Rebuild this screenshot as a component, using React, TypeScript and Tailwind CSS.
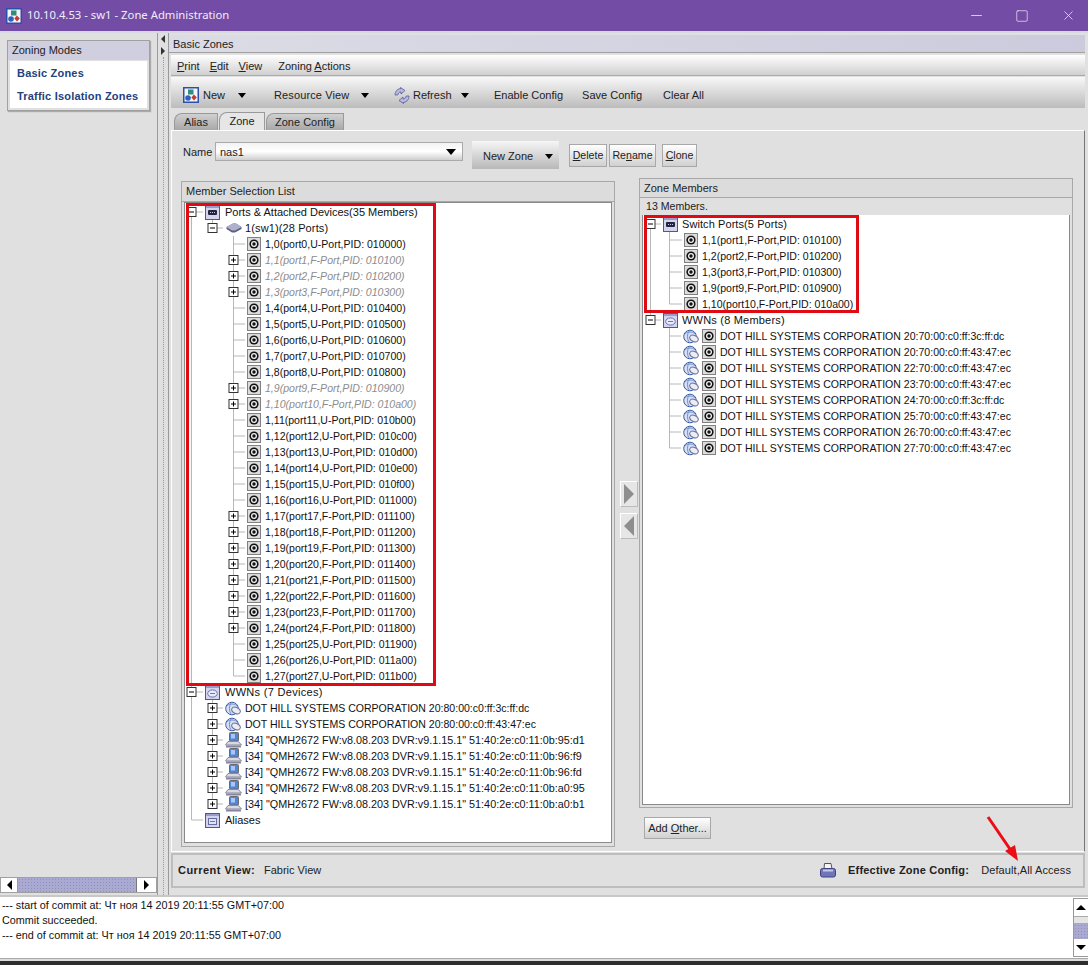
import type { ReactNode } from "react";
import { Minus, Square, X } from "lucide-react";

const ports: [string, string, string, boolean][] = [
  ["1,0", "port0,U", "010000", false],
  ["1,1", "port1,F", "010100", true],
  ["1,2", "port2,F", "010200", true],
  ["1,3", "port3,F", "010300", true],
  ["1,4", "port4,U", "010400", false],
  ["1,5", "port5,U", "010500", false],
  ["1,6", "port6,U", "010600", false],
  ["1,7", "port7,U", "010700", false],
  ["1,8", "port8,U", "010800", false],
  ["1,9", "port9,F", "010900", true],
  ["1,10", "port10,F", "010a00", true],
  ["1,11", "port11,U", "010b00", false],
  ["1,12", "port12,U", "010c00", false],
  ["1,13", "port13,U", "010d00", false],
  ["1,14", "port14,U", "010e00", false],
  ["1,15", "port15,U", "010f00", false],
  ["1,16", "port16,U", "011000", false],
  ["1,17", "port17,F", "011100", false],
  ["1,18", "port18,F", "011200", false],
  ["1,19", "port19,F", "011300", false],
  ["1,20", "port20,F", "011400", false],
  ["1,21", "port21,F", "011500", false],
  ["1,22", "port22,F", "011600", false],
  ["1,23", "port23,F", "011700", false],
  ["1,24", "port24,F", "011800", false],
  ["1,25", "port25,U", "011900", false],
  ["1,26", "port26,U", "011a00", false],
  ["1,27", "port27,U", "011b00", false],
];

const hosts = [
  '[34] "QMH2672 FW:v8.08.203 DVR:v9.1.15.1" 51:40:2e:c0:11:0b:95:d1',
  '[34] "QMH2672 FW:v8.08.203 DVR:v9.1.15.1" 51:40:2e:c0:11:0b:96:f9',
  '[34] "QMH2672 FW:v8.08.203 DVR:v9.1.15.1" 51:40:2e:c0:11:0b:96:fd',
  '[34] "QMH2672 FW:v8.08.203 DVR:v9.1.15.1" 51:40:2e:c0:11:0b:a0:95',
  '[34] "QMH2672 FW:v8.08.203 DVR:v9.1.15.1" 51:40:2e:c0:11:0b:a0:b1',
];

const zoneWwns = [
  "20:70:00:c0:ff:3c:ff:dc",
  "20:70:00:c0:ff:43:47:ec",
  "22:70:00:c0:ff:43:47:ec",
  "23:70:00:c0:ff:43:47:ec",
  "24:70:00:c0:ff:3c:ff:dc",
  "25:70:00:c0:ff:43:47:ec",
  "26:70:00:c0:ff:43:47:ec",
  "27:70:00:c0:ff:43:47:ec",
];

const zonePorts = [
  "1,1(port1,F-Port,PID: 010100)",
  "1,2(port2,F-Port,PID: 010200)",
  "1,3(port3,F-Port,PID: 010300)",
  "1,9(port9,F-Port,PID: 010900)",
  "1,10(port10,F-Port,PID: 010a00)",
];

// tree guide lines plus the optional +/- box, one row tall
const Gutter = ({ width, lines, box, boxX = 0 }: { width: number; lines: string; box?: "plus" | "minus"; boxX?: number }) => (
  <svg width={width} height={16} className="shrink-0">
    <path d={lines} stroke="#b8b8b8" fill="none" />
    {box && (
      <g>
        <rect x={boxX - 4} y={3.5} width={9} height={9} fill="#fff" stroke="#333" />
        <path d={`M${boxX - 2} 8H${boxX + 3}`} stroke="#000" />
        {box === "plus" && <path d={`M${boxX + 0.5} 5.5V10.5`} stroke="#000" />}
      </g>
    )}
  </svg>
);

const PortIcon = () => (
  <svg width={14} height={14} viewBox="0 0 14 14" className="shrink-0">
    <rect x={0.5} y={0.5} width={13} height={13} fill="#dcdcdc" stroke="#808080" />
    <circle cx={7} cy={7} r={4.6} fill="#111" />
    <circle cx={7} cy={7} r={3} fill="#f2f2f2" />
    <circle cx={7} cy={7} r={1.7} fill="#111" />
  </svg>
);

const RootIcon = ({ kind }: { kind: "ports" | "wwn" | "alias" }) => (
  <svg width={15} height={15} viewBox="0 0 15 15" className="shrink-0">
    <rect x={0.5} y={0.5} width={14} height={14} fill="#d4d4ee" stroke="#55558f" />
    <rect x={1} y={1} width={13} height={2} fill="#9a9acb" />
    {kind === "ports" && <rect x={3} y={5} width={9} height={5} rx={1} fill="#24243a" />}
    {kind === "ports" && <path d="M5 7.5H10" stroke="#c8c8ea" strokeDasharray="1 1" />}
    {kind === "wwn" && <ellipse cx={7.5} cy={8.5} rx={4.8} ry={3.6} fill="#eaeaf8" stroke="#6476bd" />}
    {kind === "wwn" && <path d="M5 8.5H10" stroke="#6476bd" />}
    {kind === "alias" && <rect x={3.5} y={5.5} width={8} height={6} fill="#d9e8ee" stroke="#6a6aa8" />}
    {kind === "alias" && <path d="M5 8.5H10" stroke="#5f7fa8" />}
  </svg>
);

const SwitchIcon = () => (
  <svg width={16} height={12} viewBox="0 0 16 12" className="shrink-0">
    <path d="M0.5 5L7 1.5H10L15.5 5V7L9 10.5H6L0.5 7Z" fill="#5f5f80" />
    <path d="M0.5 5L7 1.5H10L15.5 5L9 8.5H6Z" fill="#aeb0cc" />
  </svg>
);

const GlobeIcon = () => (
  <svg width={16} height={15} viewBox="0 0 16 15" className="shrink-0">
    <circle cx={7} cy={7.5} r={6.3} fill="#d3e0f6" stroke="#3c5ba0" />
    <path d="M2 4.5C5 2.5 9 2.5 12 4.5" stroke="#6f90d0" fill="none" />
    <path d="M6.5 1.5C3.8 4.5 3.8 10.5 6.5 13.5" stroke="#6f90d0" fill="none" />
    <ellipse cx={11} cy={9.5} rx={4.5} ry={3} transform="rotate(25 11 9.5)" fill="#ececf4" stroke="#6b6f96" />
  </svg>
);

const HostIcon = () => (
  <svg width={17} height={16} viewBox="0 0 17 16" className="shrink-0">
    <rect x={4.5} y={0.5} width={9} height={8.5} rx={1} fill="#4f86dc" stroke="#6b6b6b" />
    <rect x={6} y={2} width={4} height={4.5} fill="#a8c8f4" />
    <path d="M3 9.5H13.5L16.5 13H0.5Z" fill="#d8d8e4" stroke="#8a8aa0" />
    <path d="M1 13.5H16V15.5H1Z" fill="#85859f" />
  </svg>
);

const AppIcon = () => (
  <svg width={16} height={16} viewBox="0 0 16 16" className="shrink-0">
    <rect x={0.75} y={0.75} width={14.5} height={14.5} fill="#f4f4fa" stroke="#2c4fa8" strokeWidth={1.5} />
    <rect x={5} y={2.5} width={5.5} height={5} fill="#2e8e7c" />
    <circle cx={5} cy={11} r={2.8} fill="#2c62bc" />
    <path d="M11 7.5L13.8 10.5L11 13.5L8.4 10.5Z" fill="#c23a30" />
  </svg>
);

const RefreshIcon = () => (
  <svg width={16} height={17} viewBox="0 0 16 17">
    <path d="M1 8C1 4 4 1.5 7 1.5L6.5 0.5L11 3.5L7 7V5C5 5 4 6.5 3.8 8Z" fill="#b8b8e4" stroke="#4c4c8c" strokeWidth={0.7} />
    <path d="M15 9C15 13 12 15.5 9 15.5L9.5 16.5L5 13.5L9 10V12C11 12 12 10.5 12.2 9Z" fill="#b8b8e4" stroke="#4c4c8c" strokeWidth={0.7} />
  </svg>
);

const PrinterIcon = () => (
  <svg width={16} height={15} viewBox="0 0 16 15" className="shrink-0">
    <path d="M4.5 0.5H11L12 6H4Z" fill="#f4f4f4" stroke="#555" />
    <rect x={0.5} y={5.5} width={15} height={8.5} rx={2} fill="#6f75b8" stroke="#3e4380" />
    <rect x={3} y={6.5} width={10} height={2} fill="#c4c8ea" />
  </svg>
);

const Caret = () => <span className="w-0 h-0 border-x-[4px] border-x-transparent border-t-[5px] border-t-black" />;

const ToolButton = ({ children, className = "" }: { children: ReactNode; className?: string }) => (
  <div className={`flex items-center h-[30px] ${className}`}>{children}</div>
);

const SmallButton = ({ children, className = "" }: { children: ReactNode; className?: string }) => (
  <button className={`h-[23px] border border-[#a8a8a8] bg-gradient-to-b from-white to-[#d0d0d0] text-[10.6px] text-[#222] ${className}`}>{children}</button>
);

const Row = ({ gutter, children, grey, className = "text-[10.55px]" }: { gutter: ReactNode; children: ReactNode; grey?: boolean; className?: string }) => (
  <div className={`flex items-center h-4 whitespace-nowrap ${className} ${grey ? "text-[#8c8c8c] italic" : "text-[#111]"}`}>{gutter}{children}</div>
);

const MemberTree = () => (
  <div className="relative flex-1 bg-white border border-[#8a8a8a] pt-[1px] overflow-hidden">
    <div className="absolute left-[1px] top-0 w-[250px] h-[483px] border-[3px] border-[#e00b12]" />
    <Row className="text-[11px]" gutter={<Gutter width={20} lines="M6.5 8V16M6.5 8H18" box="minus" boxX={6} />}>
      <RootIcon kind="ports" />
      <span className="ml-[5px]">Ports &amp; Attached Devices(35 Members)</span>
    </Row>
    <Row className="text-[11px] tracking-[0.12px]" gutter={<Gutter width={41} lines="M6.5 0V16M27.5 0V8H38" box="minus" boxX={27} />}>
      <SwitchIcon />
      <span className="ml-[3px]">1(sw1)(28 Ports)</span>
    </Row>
    {ports.map(([slot, name, pid, grey], i) => {
      const last = i === ports.length - 1;
      const expandable = grey || (i >= 17 && i <= 24);
      return (
        <Row
          key={slot}
          grey={grey}
          gutter={<Gutter width={62} lines={`M6.5 0V16M48.5 0V${last ? 8 : 16}M48.5 8H60`} box={expandable ? "plus" : undefined} boxX={48} />}
        >
          <PortIcon />
          <span className="ml-[4px] pt-[2px]">{`${slot}(${name}-Port,PID: ${pid})`}</span>
        </Row>
      );
    })}
    <Row className="text-[11px] tracking-[0.3px]" gutter={<Gutter width={20} lines="M6.5 0V16M6.5 8H18" box="minus" boxX={6} />}>
      <RootIcon kind="wwn" />
      <span className="ml-[5px]">WWNs (7 Devices)</span>
    </Row>
    {["20:80:00:c0:ff:3c:ff:dc", "20:80:00:c0:ff:43:47:ec"].map((wwn) => (
      <Row key={wwn} gutter={<Gutter width={40} lines="M6.5 0V16M27.5 0V16M27.5 8H38" box="plus" boxX={27} />}>
        <GlobeIcon />
        <span className="ml-[4px] pt-[2px]">{`DOT HILL SYSTEMS CORPORATION ${wwn}`}</span>
      </Row>
    ))}
    {hosts.map((host, i) => (
      <Row key={host} className="text-[10.8px]" gutter={<Gutter width={40} lines={`M6.5 0V16M27.5 0V${i === 4 ? 8 : 16}M27.5 8H38`} box="plus" boxX={27} />}>
        <HostIcon />
        <span className="ml-[3px]">{host}</span>
      </Row>
    ))}
    <Row className="text-[11px]" gutter={<Gutter width={20} lines="M6.5 0V8H18" />}>
      <RootIcon kind="alias" />
      <span className="ml-[5px]">Aliases</span>
    </Row>
  </div>
);

const ZoneTree = () => (
  <div className="relative flex-1 bg-white border border-[#8a8a8a] border-t-0 pt-[1px] overflow-hidden">
    <div className="absolute left-[1px] top-0 w-[215px] h-[98px] border-[3px] border-[#e00b12]" />
    <Row className="text-[11px] tracking-[0.08px]" gutter={<Gutter width={20} lines="M7.5 8V16M7.5 8H18" box="minus" boxX={7} />}>
      <RootIcon kind="ports" />
      <span className="ml-[4px]">Switch Ports(5 Ports)</span>
    </Row>
    {zonePorts.map((port, i) => (
      <Row key={port} gutter={<Gutter width={41} lines={`M7.5 0V16M26.5 0V${i === 4 ? 8 : 16}M26.5 8H39`} />}>
        <PortIcon />
        <span className="ml-[4px] pt-[2px]">{port}</span>
      </Row>
    ))}
    <Row className="text-[11px] tracking-[0.2px]" gutter={<Gutter width={20} lines="M7.5 0V8H18" box="minus" boxX={7} />}>
      <RootIcon kind="wwn" />
      <span className="ml-[4px]">WWNs (8 Members)</span>
    </Row>
    {zoneWwns.map((wwn, i) => (
      <Row key={i} gutter={<Gutter width={40} lines={`M26.5 0V${i === 7 ? 8 : 16}M26.5 8H38`} />}>
        <GlobeIcon />
        <span className="ml-[3px] mr-[4px] flex"><PortIcon /></span>
        <span className="pt-[2px]">{`DOT HILL SYSTEMS CORPORATION ${wwn}`}</span>
      </Row>
    ))}
  </div>
);

export default function App() {
  return (
    <div className="relative w-[1088px] h-[965px] flex flex-col overflow-hidden bg-[#e0e0e0] font-['Liberation_Sans',Arial,sans-serif] text-[11px] text-[#222]">
      {/* title bar */}
      <div className="h-[33px] shrink-0 flex items-center bg-[#734ca5] border-b-2 border-[#d8d8e0] pl-[6px] text-[#f1edf7]">
        <AppIcon />
        <span className="ml-[5px] text-[11.3px] font-['Noto_Sans',sans-serif]">10.10.4.53 - sw1 - Zone Administration</span>
        <div className="ml-auto flex items-center text-[#f1edf7]">
          <Minus size={17} strokeWidth={1.1} className="mr-[30px]" />
          <Square size={14} strokeWidth={1.2} className="mr-[32px]" />
          <X size={15} strokeWidth={1.2} className="mr-[12px]" />
        </div>
      </div>

      <div className="flex-1 flex min-h-0">
        {/* zoning modes sidebar */}
        <aside className="w-[157px] shrink-0 flex flex-col pt-[7px]">
          <div className="mx-[7px] w-[143px] border border-[#a0a0a0] shadow-[1px_1px_1px_#aaa]">
            <div className="h-[19px] flex items-center pl-[4px] bg-[#cfcfe0] text-[11px]">Zoning Modes</div>
            <div className="mx-[2px] mb-[2px] mt-[1px] h-[47px] bg-white flex flex-col gap-[7px] pl-[7px] pt-[4px] text-[#23427e] font-bold tracking-[0.2px]">
              <div className="leading-[16px]">Basic Zones</div>
              <div className="leading-[16px]">Traffic Isolation Zones</div>
            </div>
          </div>
          <div className="mt-auto h-[16px] mb-[2px] flex border border-[#a0a0a0] bg-[#e8e8e8]">
            <div className="w-[17px] flex items-center justify-center bg-white border-r border-[#999]">
              <span className="w-0 h-0 border-y-[5px] border-y-transparent border-r-[5px] border-r-black" />
            </div>
            <div className="flex-1 bg-[#a9a9d2] border-r border-[#777] bg-[radial-gradient(#8f8fc0_1px,transparent_1px)] bg-[length:3px_3px]" />
            <div className="w-[19px] flex items-center justify-center bg-white">
              <span className="w-0 h-0 border-y-[5px] border-y-transparent border-l-[5px] border-l-black" />
            </div>
          </div>
        </aside>

        {/* splitter */}
        <div className="w-[11px] shrink-0 flex flex-col items-center border-l border-[#9a9a9a] pt-[2px]">
          <span className="w-0 h-0 border-y-[4px] border-y-transparent border-r-[4px] border-r-[#333]" />
          <span className="mt-[4px] w-0 h-0 border-y-[4px] border-y-transparent border-l-[4px] border-l-[#333]" />
          <div className="flex-1 mt-[2px] border-l border-dotted border-[#999]" />
        </div>

        {/* main panel */}
        <main className="flex-1 min-w-0 flex flex-col pt-[2px] pr-[3px] pb-[7px] border-l border-[#9a9a9a]">
          <div className="h-[18px] shrink-0 flex items-center pl-[4px] pt-[2px] bg-gradient-to-r from-[#dcdce6] to-[#cbcbdd] border-b border-[#a0a0a0]">Basic Zones</div>
          <div className="h-[21px] shrink-0 mt-[2px] ml-[2px] flex items-center pl-[6px] pt-[2px] bg-gradient-to-b from-white to-[#d0d0d0] border-b border-[#aaa]">
            <span><u>P</u>rint</span>
            <span className="ml-[10px]"><u>E</u>dit</span>
            <span className="ml-[10px]"><u>V</u>iew</span>
            <span className="ml-[16px]">Zoning <u>A</u>ctions</span>
          </div>
          <div className="h-[31px] shrink-0 mt-[1px] ml-[2px] flex items-center pl-[12px] pt-[5px] bg-gradient-to-b from-[#f8f8f8] to-[#bcbcbc]">
            <ToolButton className="w-[69px]"><AppIcon /><span className="ml-[4px] mr-[13px]">New</span><Caret /></ToolButton>
            <ToolButton className="ml-[22px] w-[111px]"><span className="mr-[12px] tracking-[0.12px]">Resource View</span><Caret /></ToolButton>
            <ToolButton className="ml-[9px] w-[90px]"><RefreshIcon /><span className="ml-[3px] mr-[9px]">Refresh</span><Caret /></ToolButton>
            <span className="ml-[10px]">Enable Config</span>
            <span className="ml-[19px]">Save Config</span>
            <span className="ml-[21px]">Clear All</span>
          </div>

          {/* tabs */}
          <div className="h-[18px] shrink-0 mt-[4px] ml-[2px] flex items-end pl-[3px] gap-[1px]">
            <div className="w-[44px] h-[17px] flex items-center justify-center rounded-tl-lg border border-b-0 border-[#999] bg-gradient-to-b from-[#d0d0d0] to-[#a8a8a8]">Alias</div>
            <div className="w-[46px] h-[18px] flex items-center justify-center rounded-tl-lg border border-b-0 border-[#999] bg-[#e6e6e6]">Zone</div>
            <div className="w-[78px] h-[17px] flex items-center justify-center rounded-tl-lg border border-b-0 border-[#999] bg-gradient-to-b from-[#d0d0d0] to-[#a8a8a8]">Zone Config</div>
          </div>

          {/* tab content */}
          <div className="h-[722px] shrink-0 ml-[2px] flex flex-col border border-white border-r-[#777] pl-[9px] pr-[9px]">
            <div className="h-[47px] shrink-0 flex items-start pt-[11px]">
              <span className="ml-[2px] mt-[2px] w-[32px]">Name</span>
              <div className="w-[248px] h-[19px] flex items-center justify-between px-[4px] pr-[6px] border border-[#aaa] bg-gradient-to-b from-[#f2f2f2] via-white to-[#cfcfcf]">
                <span className="pt-[2px]">nas1</span>
                <span className="w-0 h-0 border-x-[5px] border-x-transparent border-t-[6px] border-t-black" />
              </div>
              <div className="ml-[9px] -mt-[1px] w-[87px] h-[28px] flex items-center gap-[12px] pl-[11px] pt-[2px] bg-gradient-to-b from-[#f6f6f6] to-[#b8b8b8]">New Zone<Caret /></div>
              <div className="ml-[10px] mt-[2px] flex">
                <SmallButton className="w-[38px]"><u>D</u>elete</SmallButton>
                <SmallButton className="ml-[2px] w-[47px]">Re<u>n</u>ame</SmallButton>
                <SmallButton className="ml-[6px] w-[35px]"><u>C</u>lone</SmallButton>
              </div>
            </div>

            <div className="flex-1 flex min-h-0 pb-[4px]">
              {/* member selection list */}
              <section className="w-[434px] shrink-0 mt-[3px] flex flex-col border border-[#a8a8a8] px-[2px] pb-[3px]">
                <div className="h-[20px] shrink-0 -mx-[2px] pl-[4px] flex items-center bg-[#dcdcdc] border-b border-[#a8a8a8]">Member Selection List</div>
                <MemberTree />
              </section>

              <div className="w-[24px] shrink-0 flex flex-col items-start pl-[5px] pt-[303px] gap-[6px]">
                <div className="w-[18px] h-[26px] flex items-center justify-center border border-white border-b-[#bbb] border-r-[#bbb] bg-[#e6e6e6]">
                  <span className="w-0 h-0 border-y-[10px] border-y-transparent border-l-[10px] border-l-[#8e8e8e]" />
                </div>
                <div className="w-[18px] h-[26px] flex items-center justify-center border border-white border-b-[#bbb] border-r-[#bbb] bg-[#e6e6e6]">
                  <span className="w-0 h-0 border-y-[10px] border-y-transparent border-r-[10px] border-r-[#8e8e8e]" />
                </div>
              </div>

              {/* zone members */}
              <section className="w-[434px] shrink-0 flex flex-col">
                <div className="h-[630px] flex flex-col border border-[#a8a8a8] px-[2px] pb-[2px]">
                  <div className="h-[19px] shrink-0 -mx-[2px] pl-[4px] flex items-center bg-[#dcdcdc] border-b border-[#a8a8a8]">Zone Members</div>
                  <div className="h-[17px] shrink-0 pl-[4px] flex items-center text-[10.6px]">13 Members.</div>
                  <ZoneTree />
                </div>
                <button className="mt-[9px] ml-[5px] w-[67px] h-[22px] border border-[#a8a8a8] bg-gradient-to-b from-white to-[#d0d0d0]">Add <u>O</u>ther...</button>
              </section>
            </div>
          </div>

          {/* status bar */}
          <div className="h-[35px] shrink-0 mt-[1px] ml-[2px] flex items-center pl-[5px] pr-[12px] border-2 border-[#bdbdbd] border-double">
            <span className="font-bold w-[86px] tracking-[0.45px]">Current View:</span>
            <span>Fabric View</span>
            <span className="ml-auto"><PrinterIcon /></span>
            <span className="ml-[12px] font-bold tracking-[0.2px]">Effective Zone Config:</span>
            <span className="ml-[12px] tracking-[0.1px]">Default,All Access</span>
          </div>
        </main>
      </div>

      {/* log area */}
      <div className="h-[63px] shrink-0 flex bg-white border-t-2 border-[#c8c8c8]">
        <div className="flex-1 pl-[2px] pt-[1px] text-[10.8px] leading-[15px] text-[#111]">
          <div>--- start of commit at: Чт ноя 14 2019 20:11:55 GMT+07:00</div>
          <div>Commit succeeded.</div>
          <div>--- end of commit at: Чт ноя 14 2019 20:11:55 GMT+07:00</div>
        </div>
        <div className="w-[15px] mt-[1px] mb-[1px] flex flex-col border border-r-0 border-[#999]">
          <div className="h-[17px] flex items-center justify-center"><span className="w-0 h-0 border-x-[5px] border-x-transparent border-b-[5px] border-b-black" /></div>
          <div className="h-[8px] bg-[#e4e4e4] border-y border-[#aaa]" />
          <div className="flex-1 bg-[#a9a9d2] bg-[radial-gradient(#8f8fc0_1px,transparent_1px)] bg-[length:3px_3px]" />
          <div className="h-[17px] flex items-center justify-center"><span className="w-0 h-0 border-x-[5px] border-x-transparent border-t-[5px] border-t-black" /></div>
        </div>
      </div>
      <div className="h-[3px] shrink-0 bg-[#dcdcdc] border-t border-[#a8a8a8]" />
      <div className="h-[4px] shrink-0 bg-[#2d2d2d]" />

      {/* annotation arrow drawn over the screenshot */}
      <svg width={40} height={50} className="absolute left-[984px] top-[814px]">
        <path d="M4 3L28 38" stroke="#ea0f14" strokeWidth={3} />
        <path d="M34 47L21 37L31 31Z" fill="#ea0f14" />
      </svg>
    </div>
  );
}
